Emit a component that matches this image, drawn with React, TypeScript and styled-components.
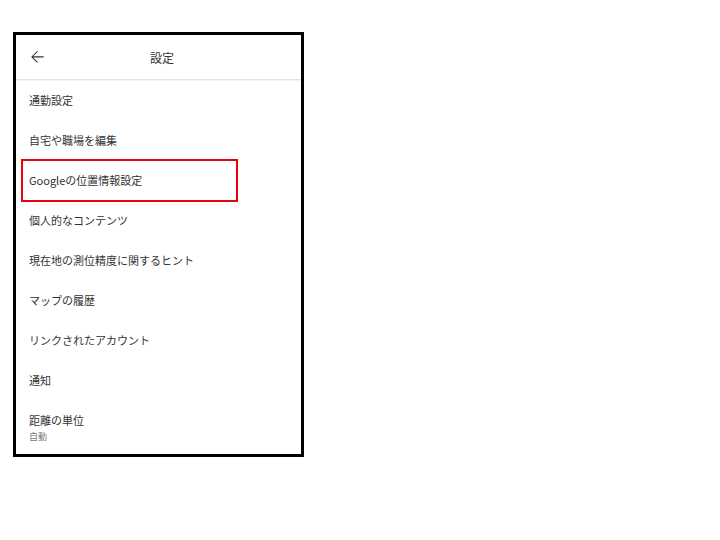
import styled, { createGlobalStyle } from "styled-components";

const GlobalStyle = createGlobalStyle`
  body {
    margin: 0;
    background: #ffffff;
    font-family: "Noto Sans CJK JP", "Noto Sans", sans-serif;
  }
`;

interface ISettingItem {
  label: string;
  sub?: string;
  highlighted?: boolean;
}

const items: ISettingItem[] = [
  { label: "通勤設定" },
  { label: "自宅や職場を編集" },
  { label: "Googleの位置情報設定", highlighted: true },
  { label: "個人的なコンテンツ" },
  { label: "現在地の測位精度に関するヒント" },
  { label: "マップの履歴" },
  { label: "リンクされたアカウント" },
  { label: "通知" },
  { label: "距離の単位", sub: "自動" },
];

function App() {
  return (
    <Page>
      <GlobalStyle />
      <PhoneFrame>
        <Header>
          <BackButton aria-label="戻る">
            <svg width="20" height="20" viewBox="0 0 24 24">
              <path
                d="M20 11.2H7.4l5.6-5.6-.9-.9L5 11.9l7.1 7.1.9-.9-5.6-5.6H20v-1.3z"
                fill="#333"
              />
            </svg>
          </BackButton>
          <Title>設定</Title>
        </Header>
        <List>
          {items.map((item) => (
            <Row key={item.label} $tall={!!item.sub}>
              {item.highlighted && <Highlight />}
              <Label>{item.label}</Label>
              {item.sub && <SubLabel>{item.sub}</SubLabel>}
            </Row>
          ))}
        </List>
      </PhoneFrame>
    </Page>
  );
}

export default App;

const Page = styled.div`
  padding: 32px 0 0 13px;
`;

const PhoneFrame = styled.div`
  width: 285px;
  height: 419px;
  border: 3px solid #000;
  background: #fff;
  overflow: hidden;
`;

const Header = styled.div`
  position: relative;
  height: 44px;
  display: flex;
  align-items: center;
  justify-content: center;
  border-bottom: 1px solid #e2e2e2;
  box-shadow: 0 1px 1px rgba(0, 0, 0, 0.04);
`;

const BackButton = styled.div`
  position: absolute;
  left: 11px;
  top: 12px;
  width: 20px;
  height: 20px;
  display: flex;
`;

const Title = styled.div`
  font-size: 12px;
  color: #333;
  margin-left: 7px;
`;

const List = styled.div`
  display: flex;
  flex-direction: column;
`;

const Row = styled.div<{ $tall: boolean }>`
  position: relative;
  height: ${(p) => (p.$tall ? "54px" : "40px")};
  display: flex;
  flex-direction: column;
  justify-content: ${(p) => (p.$tall ? "flex-start" : "center")};
  padding: ${(p) => (p.$tall ? "12px 13px 0" : "0 13px")};
  box-sizing: border-box;
`;

const Highlight = styled.div`
  position: absolute;
  left: 5px;
  top: -1px;
  width: 217px;
  height: 43px;
  border: 2.5px solid #e8000b;
  box-sizing: border-box;
`;

const Label = styled.div`
  font-size: 11px;
  line-height: 16px;
  color: #333;
`;

const SubLabel = styled.div`
  font-size: 9px;
  line-height: 14px;
  margin-top: 2px;
  color: #777;
`;
